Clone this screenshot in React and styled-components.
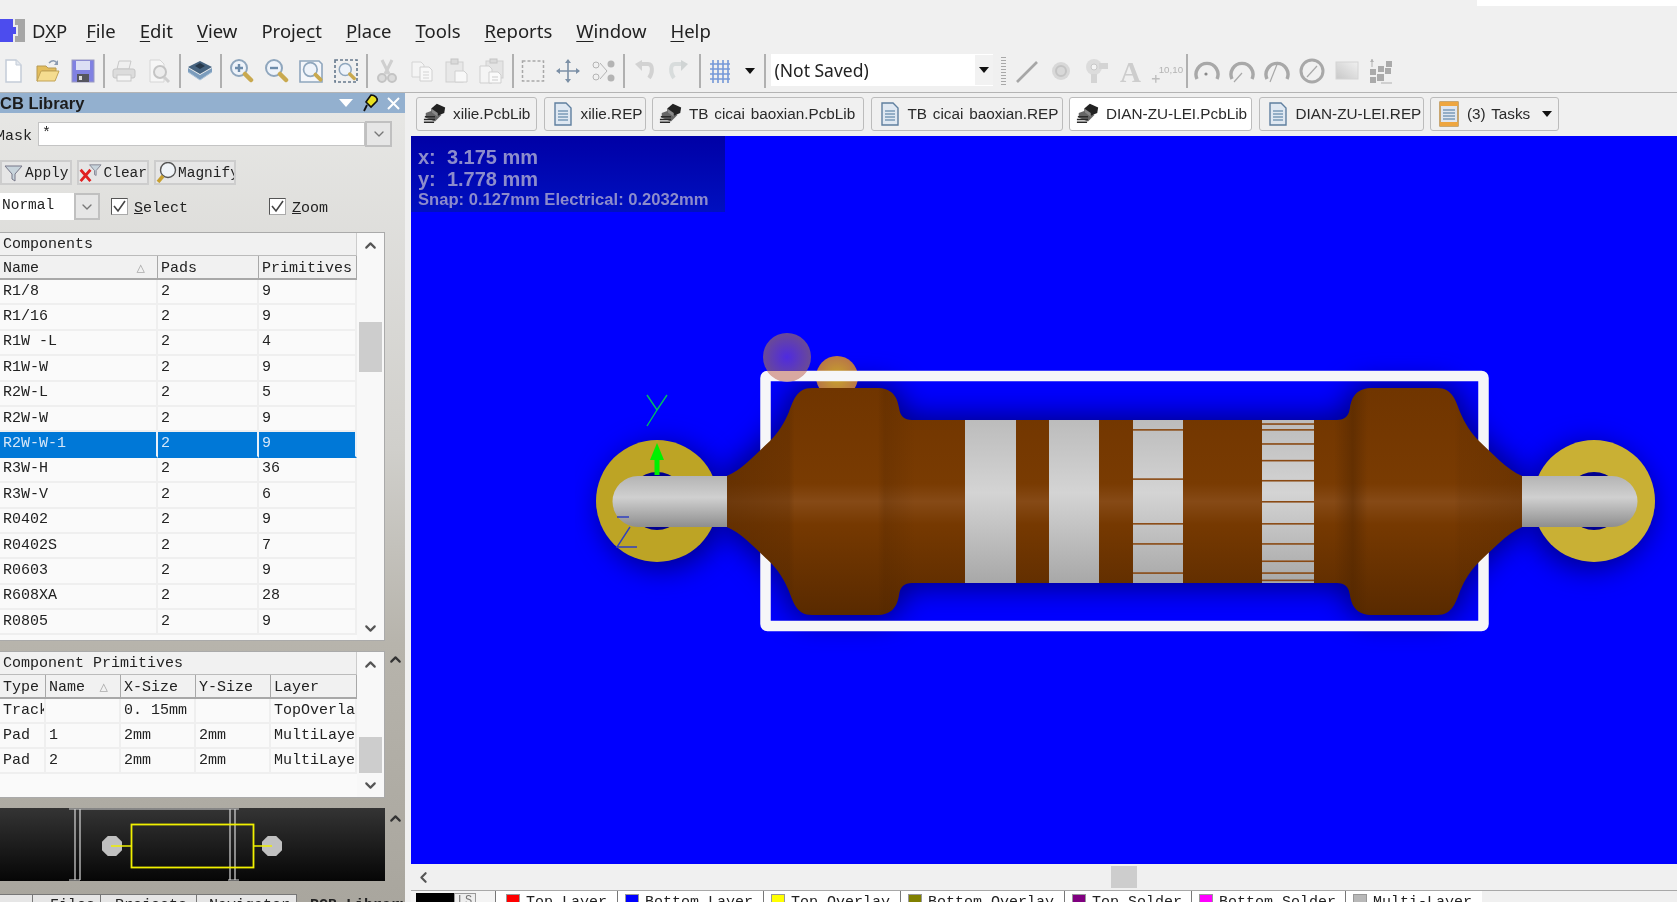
import React from "react";
import styled, { createGlobalStyle } from "styled-components";
import { ChevronUp, ChevronDown, ChevronLeft } from "lucide-react";

const GlobalStyle = createGlobalStyle`
  html, body { margin: 0; padding: 0; height: 100%; overflow: hidden; background: #f0f0f0; }
  #root { height: 100%; }
`;

const MONO = `"Liberation Mono", monospace`;
const UI = `"Noto Sans", "Open Sans", sans-serif`;
const ARIAL = `"Liberation Sans", Arial, sans-serif`;

/* ---- small drawings ---- */
const Svg = ({ children, w = 26, h = 26 }) => (
  <svg width={w} height={h} viewBox={`0 0 ${w} ${h}`}>{children}</svg>
);

const Glass = ({ children, grey }) => (
  <>
    <circle cx="11" cy="10" r="8" fill="#eef3fa" stroke={grey ? "#bbb" : "#8fa6bd"} strokeWidth="2" />
    <path d="M17 16l6 6" stroke="#c9a94f" strokeWidth="4.5" strokeLinecap="round" />
    {children}
  </>
);

const ICONS = {
  newDoc: <Svg><path d="M6 2h10l5 5v17H6z" fill="#fff" stroke="#c3ccd8" strokeWidth="1.5" /><path d="M16 2v5h5" fill="#e4e8ee" stroke="#c3ccd8" /></Svg>,
  open: <Svg><path d="M2 8h9l2 2h8v3H7L3 23H2z" fill="#e3bd5c" stroke="#b79a55" /><path d="M6 13h18l-4 10H2z" fill="#f5dc8f" stroke="#c2a356" /><path d="M14 5c3-3 6-3 8 0" fill="none" stroke="#8a9ab0" strokeWidth="1.6" /><path d="M23 2v5h-4z" fill="#8a9ab0" /></Svg>,
  save: <Svg><rect x="2" y="2" width="22" height="22" fill="#8081e2" stroke="#9a9ac0" /><rect x="6" y="3" width="14" height="9" fill="#dcdff4" /><rect x="7" y="16" width="12" height="8" fill="#55555f" /><rect x="9" y="18" width="3" height="4" fill="#ddd" /></Svg>,
  print: <Svg><path d="M8 3h12l-2 8H6z" fill="#efefef" stroke="#c8c8c8" /><rect x="2" y="11" width="22" height="9" rx="2" fill="#dcdcdc" stroke="#c4c4c4" /><rect x="6" y="17" width="14" height="6" fill="#f4f4f4" stroke="#c8c8c8" /></Svg>,
  preview: <Svg><path d="M4 2h10l4 4v18H4z" fill="#f6f6f6" stroke="#d6d6d6" /><circle cx="14" cy="14" r="6" fill="#ececec" stroke="#c4c4c4" strokeWidth="2" /><path d="M18 19l5 5" stroke="#cfcfcf" strokeWidth="3" /></Svg>,
  layers: <Svg><path d="M13 16L1 9l12-6 12 6z" fill="#46637f" /><path d="M1 10v4l12 8 12-8v-4L13 17z" fill="#7b9cbc" /><path d="M8 8l5-3 5 3-5 3z" fill="#26384a" /><path d="M1 14l12 8 12-8" fill="none" stroke="#aac2d8" /></Svg>,
  zoomIn: <Svg><Glass><path d="M7 10h8M11 6v8" stroke="#6d8cab" strokeWidth="2.4" /></Glass></Svg>,
  zoomOut: <Svg><Glass><path d="M7 10h8" stroke="#6d8cab" strokeWidth="2.4" /></Glass></Svg>,
  zoomFit: <Svg><path d="M2 3h19l3 3v18H2z" fill="#f4f6fa" stroke="#8fa6bd" strokeWidth="1.6" /><g transform="translate(3 3) scale(.85)"><Glass /></g></Svg>,
  zoomSel: <Svg><rect x="2" y="2" width="22" height="22" fill="none" stroke="#65788c" strokeWidth="1.6" strokeDasharray="3 2" /><g transform="translate(4 4) scale(.75)"><Glass /></g></Svg>,
  cut: <Svg><path d="M8 2l7 14M18 2l-7 14" stroke="#cfcfcf" strokeWidth="3" /><circle cx="8" cy="20" r="4" fill="#dcdcdc" stroke="#c4c4c4" strokeWidth="2" /><circle cx="18" cy="20" r="4" fill="#dcdcdc" stroke="#c4c4c4" strokeWidth="2" /></Svg>,
  copy: <Svg><path d="M3 4h9l3 3v12H3z" fill="#f4f4f4" stroke="#d4d4d4" /><path d="M11 9h9l3 3v11H11z" fill="#f8f8f8" stroke="#d0d0d0" /><path d="M14 14h6M14 17h6M14 20h6" stroke="#d4d4d4" /></Svg>,
  paste: <Svg><rect x="2" y="4" width="17" height="20" fill="#e8e8e8" stroke="#cfcfcf" /><rect x="7" y="1" width="7" height="5" fill="#dadada" stroke="#c4c4c4" /><path d="M11 13h9l3 3v8H11z" fill="#f8f8f8" stroke="#d0d0d0" /></Svg>,
  paste2: <Svg><rect x="7" y="3" width="17" height="17" fill="#e4e4e4" stroke="#cfcfcf" /><rect x="11" y="1" width="7" height="4" fill="#dadada" stroke="#c4c4c4" /><path d="M1 8h9l3 3v14H1z" fill="#f4f4f4" stroke="#cfcfcf" /><path d="M10 14h9l3 3v8H10z" fill="#fafafa" stroke="#cfcfcf" /><path d="M13 19h6M13 22h6" stroke="#ccc" /></Svg>,
  rect: <Svg><rect x="2.5" y="3" width="21" height="20" fill="none" stroke="#a8a8a8" strokeWidth="1.5" strokeDasharray="3 2" /></Svg>,
  move: <Svg><path d="M13 2v22M2 13h22" stroke="#7c90a6" strokeWidth="1.6" /><path d="M13 1l3 4h-6zM13 25l3-4h-6zM1 13l4-3v6zM25 13l-4-3v6z" fill="#7c90a6" /></Svg>,
  xmove: <Svg><circle cx="6" cy="7" r="3" fill="none" stroke="#b4b4b4" /><circle cx="6" cy="19" r="3" fill="none" stroke="#b4b4b4" /><circle cx="21" cy="6" r="3.5" fill="#b4b4b4" /><circle cx="21" cy="20" r="3.5" fill="#b4b4b4" /><path d="M10 5l7 8-7 8" fill="none" stroke="#b4b4b4" /></Svg>,
  undo: <Svg><path d="M9 6h8c5 0 5 9 1 14" fill="none" stroke="#d2d2d2" strokeWidth="4" /><path d="M4 6l7-4v11z" fill="#d2d2d2" /></Svg>,
  redo: <Svg><path d="M17 6H9c-5 0-5 9-1 14" fill="none" stroke="#d8dcdc" strokeWidth="4" /><path d="M22 6l-7-4v11z" fill="#d0d4d4" /></Svg>,
  grid: <Svg><path d="M3 6h20M3 11h20M3 16h20M3 21h20M6 2v23M11 2v23M16 2v23M21 2v23" stroke="#7498d8" strokeWidth="1.6" /></Svg>,
  line: <Svg><path d="M4 24L24 4" stroke="#a6a6a6" strokeWidth="2.6" /></Svg>,
  via: <Svg><circle cx="13" cy="13" r="9" fill="#d8d8d8" /><circle cx="13" cy="13" r="5" fill="none" stroke="#c4c4c4" strokeWidth="2" /></Svg>,
  pad: <Svg><circle cx="11" cy="9" r="8" fill="#dcdcdc" /><circle cx="11" cy="9" r="3" fill="#f4f4f4" stroke="#c8c8c8" /><path d="M16 5h9v6h-9zM8 16h6v9H8z" fill="#d4d4d4" /></Svg>,
  text: <Svg><text x="2" y="24" fontFamily="Liberation Serif, serif" fontWeight="700" fontSize="29" fill="#cdcdcd">A</text></Svg>,
  coord: <Svg w={36}><path d="M3 21h8M7 17v8" stroke="#bdbdbd" strokeWidth="1.4" /><text x="10" y="15" fontFamily="Liberation Sans, sans-serif" fontSize="10" fill="#b4b4b4">10,10</text></Svg>,
  arc1: <Svg><path d="M3 21A11 11 0 1 1 23 21" fill="none" stroke="#a8a8a8" strokeWidth="3.4" /><circle cx="12" cy="16" r="1.6" fill="#888" /></Svg>,
  arc2: <Svg><path d="M3 21A11 11 0 1 1 23 21" fill="none" stroke="#a8a8a8" strokeWidth="3.4" /><path d="M5 24l8-9" stroke="#a8a8a8" strokeWidth="1.2" /></Svg>,
  arc3: <Svg><path d="M3 21A11 11 0 1 1 23 21" fill="none" stroke="#a8a8a8" strokeWidth="3.4" /><path d="M6 24l8-20" stroke="#a8a8a8" strokeWidth="1.2" /></Svg>,
  arc4: <Svg><circle cx="13" cy="13" r="11" fill="none" stroke="#a8a8a8" strokeWidth="3" /><path d="M8 19l10-11" stroke="#a8a8a8" strokeWidth="1.2" /></Svg>,
  fill: <Svg><defs><linearGradient id="fillG" x1="0" y1="1" x2="1" y2="0"><stop offset="0" stopColor="#c8c8c8" /><stop offset="1" stopColor="#f0f0f0" /></linearGradient></defs><rect x="2" y="4" width="22" height="17" fill="url(#fillG)" stroke="#d4d4d4" /></Svg>,
  union: <Svg><path d="M3 1v8" stroke="#b0b0b0" /><path d="M1 4l2-3 2 3z" fill="#b0b0b0" /><path d="M8 16h7v7H8zM9 8h6v6H9zM16 10h6v6h-6zM17 3h6v6h-6zM1 11h6v6H1zM1 19h6v6H1z" fill="#aaa" /><path d="M12 25h11" stroke="#b0b0b0" /></Svg>,
};

const Chip = () => (
  <svg width="26" height="24" viewBox="0 0 26 24">
    <path d="M3 11l8-3 9 5-7 7-10-4z" fill="#666" />
    <path d="M9 6l6-5 9 4-1 6-7 3-7-4z" fill="#222" />
    <path d="M9 6l7 5v4L9 10z" fill="#888" />
    <path d="M2 15h11M1 18h12M1 21h11" stroke="#2a2a2a" strokeWidth="1.5" />
  </svg>
);

const Doc = () => (
  <svg width="20" height="24" viewBox="0 0 20 24">
    <path d="M2 1h11l5 5v17H2z" fill="#dfe8f2" stroke="#5f7f9f" strokeWidth="1.4" />
    <path d="M5 9h10M5 12h10M5 15h10M5 18h10" stroke="#7b9ab8" strokeWidth="1.3" />
  </svg>
);

const TasksDoc = () => (
  <svg width="20" height="26" viewBox="0 0 20 26">
    <rect x="1" y="1" width="18" height="24" fill="#dfe6f0" stroke="#b07820" strokeWidth="1.2" />
    <rect x="1" y="1" width="18" height="4" fill="#eea640" />
    <rect x="1" y="21" width="18" height="4" fill="#eea640" />
    <path d="M4 9h12M4 12h12M4 15h12M4 18h12" stroke="#7b9ab8" strokeWidth="1.3" />
  </svg>
);

const Caret = () => (
  <svg width="10" height="6" viewBox="0 0 10 6"><path d="M0 0h10L5 6z" fill="#111" /></svg>
);

const Tick = () => (
  <svg width="15" height="15" viewBox="0 0 15 15"><path d="M2 7l4 5 7-10" fill="none" stroke="#444" strokeWidth="1.6" /></svg>
);

const DxpMark = () => (
  <svg width="25" height="23" viewBox="0 0 25 23">
    <rect width="25" height="23" fill="#a6a6a6" />
    <path d="M0 0h13v8h3v7h-3v8H0z" fill="#4c4cee" />
    <path d="M13 0h2v6h3v11h-3v6h-2v-8h3V8h-3z" fill="#ececec" />
  </svg>
);

/* ---- frame ---- */
const Page = styled.div`
  position: relative;
  width: 1677px;
  height: 902px;
  overflow: hidden;
  background: #f0f0f0;
  display: flex;
  flex-direction: column;
  filter: blur(0.4px);
`;

const TopStrip = styled.div`
  position: absolute;
  top: 0;
  right: 0;
  width: 200px;
  height: 6px;
  background: #fff;
`;

const MenuBar = styled.div`
  height: 52px;
  flex: none;
  display: flex;
  align-items: center;
  padding: 9px 0 0 0;
  box-sizing: border-box;
  font: 18.5px ${UI};
  color: #222;
`;

const Logo = styled.div`
  display: flex;
  margin: -1px 7px 0 0;
`;

const MenuItem = styled.span`
  margin-right: ${(p) => p.$gap}px;
  u { text-underline-offset: 3px; }
`;

const ToolBar = styled.div`
  height: 41px;
  flex: none;
  display: flex;
  align-items: flex-start;
  padding-top: 2px;
  margin-left: -4.5px;
  box-sizing: border-box;
  border-bottom: 1px solid #b4b4b4;
`;

const Slot = styled.div`
  width: ${(p) => p.$w || 35}px;
  height: 34px;
  flex: none;
  display: flex;
  align-items: center;
  justify-content: center;
`;

const Sep = styled.div`
  width: 6px;
  height: 34px;
  flex: none;
  &::before {
    content: "";
    display: block;
    width: 2px;
    height: 100%;
    margin: 0 auto;
    background: #b0b0b0;
  }
`;

const Grip = styled.div`
  width: 5px;
  height: 28px;
  margin: 3px 3px 0 8px;
  flex: none;
  background: repeating-linear-gradient(180deg, #a8a8a8 0 1px, #f0f0f0 1px 3px);
`;

const Combo = styled.div`
  width: 222px;
  height: 32px;
  margin-left: 3px;
  flex: none;
  box-sizing: border-box;
  background: #fff;
  display: flex;
  align-items: center;
  justify-content: space-between;
  padding-left: 4px;
  font: 17.5px ${UI};
  color: #222;
`;

const ComboArrow = styled.div`
  width: 18px;
  height: 30px;
  background: #f2f2f2;
  display: flex;
  align-items: center;
  justify-content: center;
`;

const Body = styled.div`
  flex: 1;
  min-height: 0;
  display: flex;
`;

/* ---- left panel ---- */
const Panel = styled.div`
  width: 405px;
  flex: none;
  margin-right: 6px;
  display: flex;
  flex-direction: column;
  overflow: hidden;
  background: linear-gradient(180deg, #e8e8e6 0, #d0cfcb 44%, #b7b4ac 68%, #a9a69e 100%);
  font: 15px ${MONO};
  color: #222;
`;

const TitleBar = styled.div`
  height: 20px;
  flex: none;
  background: #93b0cf;
  display: flex;
  align-items: center;
  justify-content: space-between;
  padding-right: 5px;
  font: bold 16.5px ${ARIAL};
  color: #1c1c1c;
`;

const TitleText = styled.span`
  margin-left: -11px;
`;

const TitleIcons = styled.div`
  display: flex;
  align-items: center;
  gap: 8px;
`;

const Row = styled.div`
  display: flex;
  align-items: center;
  flex: none;
  height: ${(p) => p.$h}px;
  margin-top: ${(p) => p.$mt}px;
`;

const MaskLabel = styled.span`
  width: 42px;
  flex: none;
  margin-left: -4px;
  padding-top: 4px;
  white-space: nowrap;
`;

const MaskInput = styled.div`
  width: 327px;
  height: 24px;
  box-sizing: border-box;
  background: #fff;
  padding: 2px 3px;
  border: 1px solid #c4c4c4;
`;

const ArrowBox = styled.div`
  width: ${(p) => p.$w}px;
  height: ${(p) => p.$h}px;
  box-sizing: border-box;
  flex: none;
  border: 2px solid #c0c0c0;
  background: #e6e6e6;
  display: flex;
  align-items: center;
  justify-content: center;
  color: #777;
`;

const FilterBtn = styled.div`
  width: ${(p) => p.$w}px;
  height: 25px;
  margin-right: 5px;
  flex: none;
  box-sizing: border-box;
  border: 2px solid #cdcdcd;
  background: #e6e6e6;
  display: flex;
  align-items: center;
  overflow: hidden;
  white-space: nowrap;
  font-size: 14.5px;
`;

const SelectBox = styled.div`
  width: 74px;
  height: 27px;
  flex: none;
  box-sizing: border-box;
  background: #fff;
  padding: 0 2px 4px;
  display: flex;
  align-items: center;
  font-size: 14.5px;
`;

const Check = styled.div`
  width: 17px;
  height: 17px;
  flex: none;
  margin-left: ${(p) => p.$ml}px;
  margin-right: 6px;
  box-sizing: border-box;
  background: #fff;
  border: 1px solid #555;
  border-bottom-color: #aaa;
  border-right-color: #aaa;
`;

const CheckLabel = styled.span`
  padding-top: 3px;
`;

const ListBox = styled.div`
  height: ${(p) => p.$h}px;
  margin-top: ${(p) => p.$mt}px;
  width: 385px;
  flex: none;
  box-sizing: border-box;
  display: flex;
  overflow: hidden;
  background: #fafafa;
  border: 1px solid #aaa;
  border-left: 0;
`;

const ListMain = styled.div`
  width: 357px;
  flex: none;
  overflow: hidden;
`;

const ListTitle = styled.div`
  height: 23px;
  box-sizing: border-box;
  background: #f1f1f1;
  padding: 3px 3px 0;
  border-bottom: 1px solid #bbb;
  border-right: 1px solid #ccc;
  white-space: pre;
`;

const Cols = styled.div`
  display: grid;
  grid-template-columns: ${(p) => p.$cols};
`;

const HeadCell = styled.div`
  height: 24px;
  box-sizing: border-box;
  padding: 4px 3px 0;
  background: #f1f1f1;
  border-bottom: 2px solid #a8a8a8;
  display: flex;
  justify-content: space-between;
  overflow: hidden;
  white-space: nowrap;
  box-shadow: inset -2px 0 0 -1px #a8a8a8;
`;

const SortMark = styled.span`
  color: #aaa;
  font-size: 14px;
  line-height: 17px;
  margin-right: 10px;
`;

const Cell = styled.div`
  height: ${(p) => p.$h}px;
  box-sizing: border-box;
  padding: 0 2px 1px 3px;
  display: flex;
  align-items: center;
  overflow: hidden;
  white-space: nowrap;
  border-right: 2px solid ${(p) => (p.$sel ? "#e8f0f8" : "#efefef")};
  border-bottom: 2px solid ${(p) => (p.$sel ? "#0078d7" : "#efefef")};
  background: ${(p) => (p.$sel ? "#0078d7" : "#fafafa")};
  color: ${(p) => (p.$sel ? "#d4e6f8" : "#222")};
`;

const ScrollCol = styled.div`
  width: 27px;
  flex: none;
  display: flex;
  flex-direction: column;
  align-items: center;
  color: #555;
  background: #f8f8f8;
`;

const ScrollBtn = styled.div`
  flex: none;
  height: 24px;
  display: flex;
  align-items: center;
  justify-content: center;
`;

const ScrollThumb = styled.div`
  width: 23px;
  height: ${(p) => p.$h}px;
  margin-top: ${(p) => p.$mt}px;
  background: #cdcdcd;
  flex: none;
`;

const Spring = styled.div`
  flex: 1;
`;

const SideBar = styled.div`
  flex: 1;
  display: flex;
  justify-content: center;
  color: #333;
`;

const ListRow = styled.div`
  display: flex;
  flex: none;
`;

const Preview = styled.div`
  width: 385px;
  height: 73px;
  margin-top: 10px;
  flex: none;
  background: linear-gradient(180deg, #343434, #060606);
`;

const PanelTabs = styled.div`
  display: flex;
  flex: none;
  margin-top: 13px;
  height: 30px;
`;

const PanelTab = styled.div`
  width: ${(p) => p.$w}px;
  flex: none;
  box-sizing: border-box;
  padding-left: ${(p) => p.$pl}px;
  padding-top: 2px;
  border-top: 1px solid ${(p) => (p.$plain ? "transparent" : "#777")};
  background: ${(p) => (p.$plain ? "transparent" : "#e6e6e6")};
  border-right: ${(p) => (p.$plain ? "0" : "1px solid #777")};
  font-weight: ${(p) => (p.$bold ? 700 : 400)};
  color: #222;
  white-space: nowrap;
  overflow: hidden;
`;

/* ---- right side ---- */
const Work = styled.div`
  flex: 1;
  min-width: 0;
  display: flex;
  flex-direction: column;
`;

const TabStrip = styled.div`
  height: 43px;
  flex: none;
  box-sizing: border-box;
  padding: 4px 0 0 5px;
  display: flex;
  gap: 6.5px;
`;

const DocTab = styled.div`
  width: ${(p) => p.$w}px;
  height: 34px;
  flex: none;
  box-sizing: border-box;
  padding-left: 6px;
  display: flex;
  align-items: center;
  border: 1px solid #bcbcbc;
  border-radius: 3px;
  background: ${(p) => (p.$active ? "#fff" : "#f0f0f0")};
  font: 15.3px ${ARIAL};
  word-spacing: 1.5px;
  color: #2a2a2a;
  white-space: nowrap;
`;

const TabIcon = styled.span`
  width: 24px;
  flex: none;
  margin-right: 6px;
  display: flex;
  justify-content: center;
`;

const TabCaret = styled.span`
  margin-left: 12px;
  display: flex;
`;

const Canvas = styled.div`
  position: relative;
  height: 728px;
  flex: none;
  background: #0000ff;
  svg { display: block; }
`;

const Readout = styled.div`
  position: absolute;
  left: 0;
  top: 0;
  width: 314px;
  height: 76px;
  box-sizing: border-box;
  padding: 10px 0 0 7px;
  background: linear-gradient(180deg, #0000a6, #0010c0);
  color: #8c8ccc;
  font: bold 20px/22px ${ARIAL};
  white-space: pre;
`;

const Snap = styled.div`
  font-size: 16.6px;
  line-height: 19px;
`;

const HScroll = styled.div`
  height: 26px;
  flex: none;
  display: flex;
  align-items: center;
  color: #555;
  padding-left: 4px;
`;

const HThumb = styled.div`
  width: 26px;
  height: 22px;
  margin-left: 679px;
  background: #cdcdcd;
`;

const LayerTabs = styled.div`
  flex: 1;
  display: flex;
  overflow: hidden;
  border-top: 1px solid #a8a8a8;
  font: 15px ${MONO};
  color: #222;
`;

const CurrentLayer = styled.div`
  width: 84px;
  flex: none;
  box-sizing: border-box;
  padding: 2px 0 0 5px;
  display: flex;
  background: #f4f4f4;
`;

const LayerSwatch = styled.div`
  width: 38px;
  height: 12px;
  background: #000;
`;

const LsBox = styled.div`
  width: 22px;
  height: 12px;
  box-sizing: border-box;
  border: 1px solid #999;
  background: #eee;
  font-size: 12px;
  line-height: 14px;
  text-align: center;
  color: #777;
`;

const LayerTab = styled.div`
  width: ${(p) => p.$w}px;
  flex: none;
  box-sizing: border-box;
  padding: 3px 0 0 ${(p) => p.$pl}px;
  display: flex;
  gap: 6px;
  background: #fff;
  white-space: nowrap;
  border-left: 1px solid #777;
`;

const Swatch = styled.span`
  width: 14px;
  height: 14px;
  flex: none;
  box-sizing: border-box;
  border: 1px solid #999;
  background: ${(p) => p.$c};
`;

/* ---- data ---- */
const MENU = [
  ["File", "F", 24], ["Edit", "E", 24], ["View", "V", 24], ["Project", "c", 24],
  ["Place", "P", 24], ["Tools", "T", 24], ["Reports", "R", 24], ["Window", "W", 24], ["Help", "H", 0],
];

const DOC_TABS = [
  { name: "xilie.PcbLib", w: 121, kind: "chip" },
  { name: "xilie.REP", w: 102, kind: "doc" },
  { name: "TB cicai baoxian.PcbLib", w: 212, kind: "chip" },
  { name: "TB cicai baoxian.REP", w: 192, kind: "doc" },
  { name: "DIAN-ZU-LEI.PcbLib", w: 183, kind: "chip", active: true },
  { name: "DIAN-ZU-LEI.REP", w: 165, kind: "doc" },
];

const COMPONENTS = [
  ["R1/8", 9], ["R1/16", 9], ["R1W -L", 4], ["R1W-W", 9], ["R2W-L", 5], ["R2W-W", 9], ["R2W-W-1", 9],
  ["R3W-H", 36], ["R3W-V", 6], ["R0402", 9], ["R0402S", 7], ["R0603", 9], ["R608XA", 28], ["R0805", 9],
];

const PRIMS = [
  ["Track", "", "0. 15mm", "", "TopOverlay"],
  ["Pad", "1", "2mm", "2mm", "MultiLayer"],
  ["Pad", "2", "2mm", "2mm", "MultiLayer"],
];

const LAYERS = [
  ["Top Layer", "#ff0000", 122, 10], ["Bottom Layer", "#0000ff", 146, 7], ["Top Overlay", "#ffff00", 137, 7],
  ["Bottom Overlay", "#808000", 164, 7], ["Top Solder", "#800080", 127, 7], ["Bottom Solder", "#ff00ff", 154, 7],
  ["Multi-Layer", "#b8b8b8", 137, 7],
];

const Underlined = ({ text, mark }) => {
  const i = text.indexOf(mark);
  return <>{text.slice(0, i)}<u>{mark}</u>{text.slice(i + 1)}</>;
};

/* ---- 3D view of the resistor ---- */
const BODY_D =
  "M727 476C742 470 758 452 770 441C778 433 784 424 789 412C793 402 796 388 812 388L876 388C892 388 897 396 899 408C900 416 904 420 912 420" +
  "L1337 420C1345 420 1349 416 1350 408C1352 396 1357 388 1373 388L1437 388C1453 388 1456 402 1460 412C1465 424 1471 433 1479 441C1491 452 1507 470 1522 476" +
  "L1522 527C1507 533 1491 551 1479 562C1471 570 1465 579 1460 591C1456 601 1453 615 1437 615L1373 615C1357 615 1352 607 1350 595C1349 587 1345 583 1337 583" +
  "L912 583C904 583 900 587 899 595C897 607 892 615 876 615L812 615C796 615 793 601 789 591C784 579 778 570 770 562C758 551 742 533 727 527Z";

const THIRD = [0.056, 0.36, 0.636, 0.76, 0.94];
const FOURTH = [0.02, 0.056, 0.143, 0.246, 0.37, 0.5, 0.636, 0.76, 0.867, 0.94, 0.985];

const Resistor = () => (
  <svg width="1266" height="728" viewBox="411 136 1266 728">
    <defs>
      <linearGradient id="brown" gradientUnits="userSpaceOnUse" x1="0" y1="388" x2="0" y2="615">
        <stop offset="0" stopColor="#703500" />
        <stop offset="0.42" stopColor="#793b02" />
        <stop offset="0.5" stopColor="#864a16" />
        <stop offset="0.6" stopColor="#763901" />
        <stop offset="1" stopColor="#592a00" />
      </linearGradient>
      <linearGradient id="band" gradientUnits="userSpaceOnUse" x1="0" y1="420" x2="0" y2="582">
        <stop offset="0" stopColor="#bcbcbc" />
        <stop offset="0.45" stopColor="#d4d4d4" />
        <stop offset="1" stopColor="#a8a8a8" />
      </linearGradient>
      <linearGradient id="pin" gradientUnits="userSpaceOnUse" x1="0" y1="476" x2="0" y2="527">
        <stop offset="0" stopColor="#b4b4b4" />
        <stop offset="0.42" stopColor="#d0d0d0" />
        <stop offset="1" stopColor="#8e8e8e" />
      </linearGradient>
      <linearGradient id="flareL" gradientUnits="userSpaceOnUse" x1="727" y1="0" x2="915" y2="0">
        <stop offset="0" stopColor="#4f2500" stopOpacity=".45" />
        <stop offset="0.33" stopColor="#4f2500" stopOpacity=".25" />
        <stop offset="0.36" stopColor="#4f2500" stopOpacity="0" />
        <stop offset="0.8" stopColor="#4f2500" stopOpacity="0" />
        <stop offset="0.84" stopColor="#4f2500" stopOpacity=".25" />
        <stop offset="1" stopColor="#4f2500" stopOpacity="0" />
      </linearGradient>
      <linearGradient id="flareR" gradientUnits="userSpaceOnUse" x1="1522" y1="0" x2="1334" y2="0">
        <stop offset="0" stopColor="#4f2500" stopOpacity=".3" />
        <stop offset="0.33" stopColor="#4f2500" stopOpacity=".12" />
        <stop offset="0.36" stopColor="#4f2500" stopOpacity="0" />
        <stop offset="0.82" stopColor="#4f2500" stopOpacity="0" />
        <stop offset="0.9" stopColor="#4f2500" stopOpacity=".5" />
        <stop offset="1" stopColor="#4f2500" stopOpacity="0" />
      </linearGradient>
      <radialGradient id="purple">
        <stop offset="0" stopColor="#4f2ae0" />
        <stop offset="1" stopColor="#6a4a96" />
      </radialGradient>
      <radialGradient id="amber">
        <stop offset="0" stopColor="#c8a428" />
        <stop offset="1" stopColor="#b87648" />
      </radialGradient>
      <filter id="soft" x="-20%" y="-40%" width="140%" height="180%">
        <feGaussianBlur stdDeviation="14" />
      </filter>
      <clipPath id="bodyClip"><path d={BODY_D} /></clipPath>
    </defs>

    <circle cx="662" cy="507" r="62" fill="#00008c" filter="url(#soft)" />
    <circle cx="1590" cy="507" r="62" fill="#00008c" filter="url(#soft)" />
    <path d={BODY_D} fill="#000088" stroke="#000088" strokeWidth="10" filter="url(#soft)" />

    <circle cx="837" cy="377" r="21" fill="url(#amber)" />
    <rect x="765.5" y="376" width="718" height="250" rx="2" fill="none" stroke="#f6f6f8" strokeWidth="10.5" />
    <circle cx="787" cy="357" r="24" fill="url(#purple)" />
    <path d="M767 371a24 24 0 0 0 40 0z" fill="#d8a8a0" />

    <circle cx="657" cy="501" r="61" fill="#bda425" />
    <circle cx="1594" cy="501" r="61" fill="#c9b034" />
    <circle cx="657" cy="501" r="29" fill="#000090" />
    <circle cx="1594" cy="501" r="29" fill="#000090" />

    <path d="M728 476H638a25.5 25.5 0 0 0 0 51H728z" fill="url(#pin)" />
    <path d="M1521 476H1612a25.5 25.5 0 0 1 0 51H1521z" fill="url(#pin)" />

    <path d="M657 475V455" stroke="#00f000" strokeWidth="5" />
    <path d="M657 443l7 17h-14z" fill="#00f000" />
    <path d="M647 395l10 15 10-15M657 410l-10 16" fill="none" stroke="#00c060" strokeWidth="1.4" />
    <path d="M630 527l-13 20h20M617 517h12" fill="none" stroke="#3040c0" strokeWidth="1.4" />

    <path d={BODY_D} fill="url(#brown)" />
    <g clipPath="url(#bodyClip)">
      <rect x="727" y="380" width="188" height="240" fill="url(#flareL)" />
      <rect x="1334" y="380" width="188" height="240" fill="url(#flareR)" />
      <rect x="965" y="420" width="51" height="163" fill="url(#band)" />
      <rect x="1049" y="420" width="50" height="163" fill="url(#band)" />
      <rect x="1133" y="420" width="50" height="163" fill="url(#band)" />
      <rect x="1262" y="420" width="52" height="163" fill="url(#band)" />
      {THIRD.map((f) => <rect key={f} x="1133" y={420 + f * 162} width="50" height="1.6" fill="#8a4a14" />)}
      {FOURTH.map((f) => <rect key={f} x="1262" y={420 + f * 162} width="52" height="1.6" fill="#8a4a14" />)}
    </g>
  </svg>
);

const octagon = (cx, cy, r) => {
  const s = r * 0.42;
  return `M${cx - s} ${cy - r}h${2 * s}l${r - s} ${r - s}v${2 * s}l${s - r} ${r - s}h${-2 * s}l${s - r} ${s - r}v${-2 * s}z`;
};

const PreviewDrawing = () => (
  <svg width="385" height="73" viewBox="0 0 385 73">
    <path d="M69 1h170M69 72h11M228 72h11M75 1v71M80 1v71M230 1v71M235 1v71" stroke="#d8d8d8" strokeWidth="1.2" fill="none" />
    <path d={octagon(112, 38, 10)} fill="#c0c0c0" />
    <path d={octagon(272, 38, 10)} fill="#c0c0c0" />
    <rect x="131.5" y="16.5" width="122" height="43" fill="none" stroke="#f0f000" strokeWidth="1.8" />
    <path d="M111 38h20M254 38h18" stroke="#f0f000" strokeWidth="1.6" />
  </svg>
);

/* ---- page ---- */
const App = () => (
  <Page>
    <GlobalStyle />
    <TopStrip />
    <MenuBar>
      <Logo><DxpMark /></Logo>
      <MenuItem $gap={19}>D<u>X</u>P</MenuItem>
      {MENU.map(([t, m, gap]) => (
        <MenuItem key={t} $gap={gap}><Underlined text={t} mark={m} /></MenuItem>
      ))}
    </MenuBar>

    <ToolBar>
      <Slot>{ICONS.newDoc}</Slot><Slot>{ICONS.open}</Slot><Slot>{ICONS.save}</Slot><Sep />
      <Slot>{ICONS.print}</Slot><Slot>{ICONS.preview}</Slot><Sep />
      <Slot>{ICONS.layers}</Slot><Sep />
      <Slot>{ICONS.zoomIn}</Slot><Slot>{ICONS.zoomOut}</Slot><Slot>{ICONS.zoomFit}</Slot><Slot>{ICONS.zoomSel}</Slot><Sep />
      <Slot>{ICONS.cut}</Slot><Slot>{ICONS.copy}</Slot><Slot>{ICONS.paste}</Slot><Slot>{ICONS.paste2}</Slot><Sep />
      <Slot>{ICONS.rect}</Slot><Slot>{ICONS.move}</Slot><Slot>{ICONS.xmove}</Slot><Sep />
      <Slot>{ICONS.undo}</Slot><Slot>{ICONS.redo}</Slot><Sep />
      <Slot>{ICONS.grid}</Slot><Slot $w={24}><Caret /></Slot><Sep />
      <Combo>(Not Saved)<ComboArrow><Caret /></ComboArrow></Combo>
      <Grip />
      <Slot>{ICONS.line}</Slot><Slot>{ICONS.via}</Slot><Slot>{ICONS.pad}</Slot><Slot>{ICONS.text}</Slot><Slot>{ICONS.coord}</Slot><Sep />
      <Slot>{ICONS.arc1}</Slot><Slot>{ICONS.arc2}</Slot><Slot>{ICONS.arc3}</Slot><Slot>{ICONS.arc4}</Slot><Slot>{ICONS.fill}</Slot><Slot>{ICONS.union}</Slot>
    </ToolBar>

    <Body>
      <Panel>
        <TitleBar>
          <TitleText>PCB Library</TitleText>
          <TitleIcons>
            <svg width="14" height="8" viewBox="0 0 14 8"><path d="M0 0h14L7 8z" fill="#fff" /></svg>
            <svg width="18" height="18" viewBox="0 0 18 18"><path d="M10 1c4 0 7 3 6 6l-6 6-5-5z" fill="#e8e020" stroke="#111" strokeWidth="1.6" /><path d="M6 11l-3 6" stroke="#111" strokeWidth="1.8" /></svg>
            <svg width="13" height="13" viewBox="0 0 13 13"><path d="M1 1l11 11M12 1L1 12" stroke="#fff" strokeWidth="2" /></svg>
          </TitleIcons>
        </TitleBar>

        <Row $h={24} $mt={9}>
          <MaskLabel>Mask</MaskLabel>
          <MaskInput>*</MaskInput>
          <ArrowBox $w={27} $h={26}><ChevronDown size={16} /></ArrowBox>
        </Row>

        <Row $h={25} $mt={14}>
          <FilterBtn $w={72}>
            <svg width="23" height="20" viewBox="0 0 23 20"><path d="M3 3h17l-7 8v7l-3-2v-5z" fill="#c8d4dc" stroke="#778" /></svg>
            Apply
          </FilterBtn>
          <FilterBtn $w={72}>
            <svg width="30" height="24" viewBox="0 0 30 24"><path d="M2 8l12 14M14 8L2 22" stroke="#e02020" strokeWidth="3.4" /><path d="M13 2h14l-6 7v6l-2-1V9z" fill="#c8d4dc" stroke="#778" /></svg>
            Clear
          </FilterBtn>
          <FilterBtn $w={82}>
            <svg width="22" height="24" viewBox="0 0 22 24" style={{ flex: "none" }}><circle cx="12" cy="9" r="7.5" fill="#f0f4f8" stroke="#555" strokeWidth="1.4" /><path d="M7 15l-5 6" stroke="#c8a030" strokeWidth="3.6" /></svg>
            Magnify
          </FilterBtn>
        </Row>

        <Row $h={27} $mt={8}>
          <SelectBox>Normal</SelectBox>
          <ArrowBox $w={26} $h={27}><ChevronDown size={16} /></ArrowBox>
          <Check $ml={11}><Tick /></Check>
          <CheckLabel><u>S</u>elect</CheckLabel>
          <Check $ml={81}><Tick /></Check>
          <CheckLabel><u>Z</u>oom</CheckLabel>
        </Row>

        <ListBox $h={409} $mt={12}>
          <ListMain>
            <ListTitle>Components</ListTitle>
            <Cols $cols="158px 101px 98px">
              <HeadCell>Name<SortMark>△</SortMark></HeadCell>
              <HeadCell>Pads</HeadCell>
              <HeadCell>Primitives</HeadCell>
              {COMPONENTS.map(([name, prims]) => {
                const sel = name === "R2W-W-1";
                return (
                  <React.Fragment key={name}>
                    <Cell $h={25.4} $sel={sel}>{name}</Cell>
                    <Cell $h={25.4} $sel={sel}>2</Cell>
                    <Cell $h={25.4} $sel={sel}>{prims}</Cell>
                  </React.Fragment>
                );
              })}
            </Cols>
          </ListMain>
          <ScrollCol>
            <ScrollBtn><ChevronUp size={17} strokeWidth={3} /></ScrollBtn>
            <ScrollThumb $h={50} $mt={65} />
            <Spring />
            <ScrollBtn><ChevronDown size={17} strokeWidth={3} /></ScrollBtn>
          </ScrollCol>
        </ListBox>

        <ListRow>
          <ListBox $h={147} $mt={10}>
            <ListMain>
              <ListTitle>Component Primitives</ListTitle>
              <Cols $cols="46px 75px 75px 75px 86px">
                <HeadCell>Type</HeadCell>
                <HeadCell>Name<SortMark>△</SortMark></HeadCell>
                <HeadCell>X-Size</HeadCell>
                <HeadCell>Y-Size</HeadCell>
                <HeadCell>Layer</HeadCell>
                {PRIMS.map((r, i) => r.map((c, j) => <Cell key={`${i}-${j}`} $h={25}>{c}</Cell>))}
              </Cols>
            </ListMain>
            <ScrollCol>
              <ScrollBtn><ChevronUp size={17} strokeWidth={3} /></ScrollBtn>
              <ScrollThumb $h={36} $mt={61} />
              <Spring />
              <ScrollBtn><ChevronDown size={17} strokeWidth={3} /></ScrollBtn>
            </ScrollCol>
          </ListBox>
          <SideBar><ChevronUp size={17} strokeWidth={3} style={{ marginTop: 10 }} /></SideBar>
        </ListRow>

        <ListRow>
          <Preview><PreviewDrawing /></Preview>
          <SideBar><ChevronUp size={17} strokeWidth={3} style={{ marginTop: 12 }} /></SideBar>
        </ListRow>

        <PanelTabs>
          <PanelTab $w={33} $pl={0} />
          <PanelTab $w={68} $pl={17}>Files</PanelTab>
          <PanelTab $w={96} $pl={14}>Projects</PanelTab>
          <PanelTab $w={100} $pl={12}>Navigator</PanelTab>
          <PanelTab $w={108} $pl={13} $bold $plain>PCB Library</PanelTab>
        </PanelTabs>
      </Panel>

      <Work>
        <TabStrip>
          {DOC_TABS.map((t) => (
            <DocTab key={t.name} $w={t.w} $active={t.active}>
              <TabIcon>{t.kind === "chip" ? <Chip /> : <Doc />}</TabIcon>
              {t.name}
            </DocTab>
          ))}
          <DocTab $w={129}>
            <TabIcon><TasksDoc /></TabIcon>
            (3) Tasks
            <TabCaret><Caret /></TabCaret>
          </DocTab>
        </TabStrip>

        <Canvas>
          <Resistor />
          <Readout>
            {"x:  3.175 mm\ny:  1.778 mm"}
            <Snap>Snap: 0.127mm Electrical: 0.2032mm</Snap>
          </Readout>
        </Canvas>

        <HScroll>
          <ChevronLeft size={17} strokeWidth={3} />
          <HThumb />
        </HScroll>

        <LayerTabs>
          <CurrentLayer><LayerSwatch /><LsBox>LS</LsBox></CurrentLayer>
          {LAYERS.map(([name, c, w, pl]) => (
            <LayerTab key={name} $w={w} $pl={pl}><Swatch $c={c} />{name}</LayerTab>
          ))}
        </LayerTabs>
      </Work>
    </Body>
  </Page>
);

export default App;
